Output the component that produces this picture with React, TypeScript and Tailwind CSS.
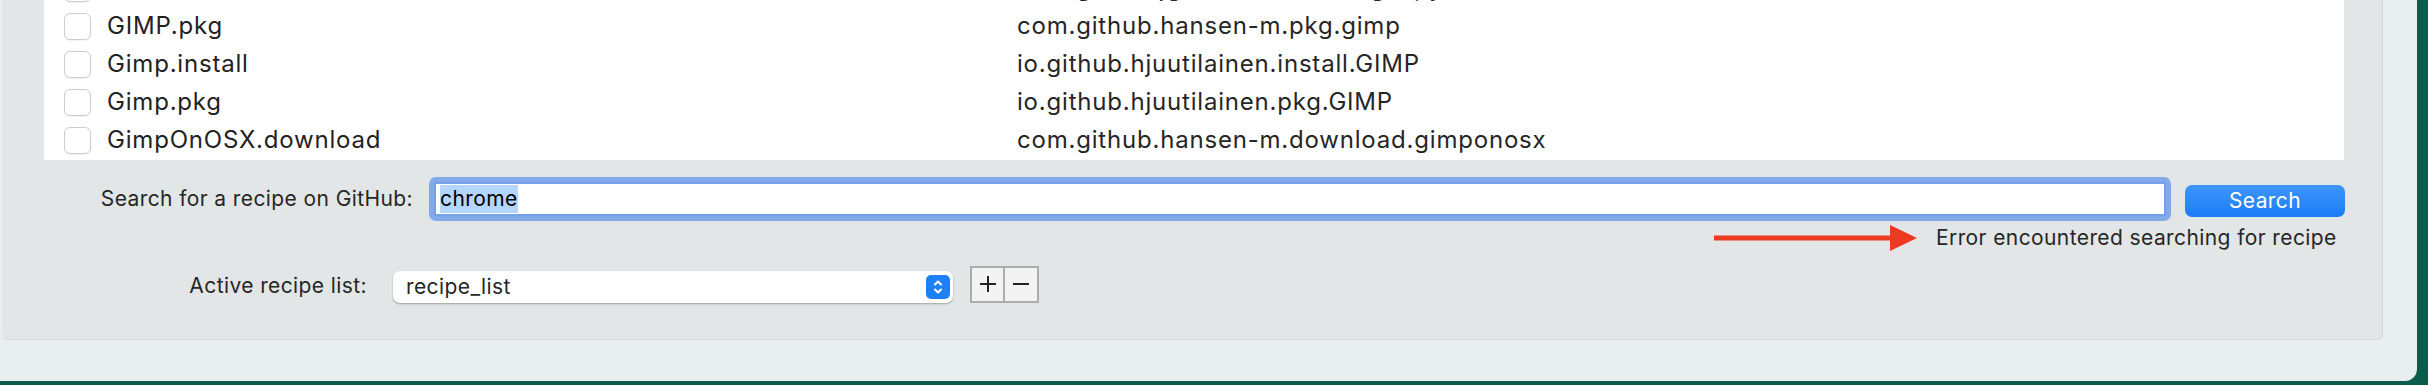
import React from 'react';

const rows = [
  { name: 'GIMP.download', id: 'com.github.jgstew.download.gimpy' },
  { name: 'GIMP.pkg', id: 'com.github.hansen-m.pkg.gimp' },
  { name: 'Gimp.install', id: 'io.github.hjuutilainen.install.GIMP' },
  { name: 'Gimp.pkg', id: 'io.github.hjuutilainen.pkg.GIMP' },
  { name: 'GimpOnOSX.download', id: 'com.github.hansen-m.download.gimponosx' },
];

const uiFont = "font-['Inter',sans-serif] text-[21px] tracking-[0.4px] text-[#262626]";

function Checkbox() {
  return (
    <div className="w-[27px] h-[27px] shrink-0 rounded-[6px] border border-[#cdcdcd] bg-white shadow-[0_1px_1px_rgba(0,0,0,0.06)]" />
  );
}

function Stepper() {
  return (
    <div className="w-[24px] h-[24px] rounded-[5px] bg-[#1e80f6] flex items-center justify-center">
      <svg width="12" height="18" viewBox="0 0 12 18" fill="none" stroke="white" strokeWidth="2" strokeLinecap="round" strokeLinejoin="round">
        <polyline points="3,6.5 6,3.5 9,6.5" />
        <polyline points="3,11.5 6,14.5 9,11.5" />
      </svg>
    </div>
  );
}

export default function App() {
  return (
    <div className="w-[2428px] h-[385px] bg-[#0b5d4b] overflow-hidden">
      <div className="w-[2417px] h-[381px] bg-[#e8eeee] rounded-br-[12px] pl-[2px]">
        <div className="w-[2381px] h-[340px] bg-[#e3e6e6] rounded-b-[6px] border-b border-r border-[#d3d7d7] flex flex-col">
          {/* recipe table */}
          <div className="ml-[42px] w-[2300px] h-[160px] bg-white overflow-hidden shrink-0">
            <div className="-mt-[31px]">
              {rows.map((r) => (
                <div key={r.name} className="flex items-center h-[38px] pl-[20px]">
                  <Checkbox />
                  <span className="ml-[16px] w-[910px] font-['Inter',sans-serif] text-[24px] tracking-[0.8px] text-[#222]">{r.name}</span>
                  <span className="font-['Inter',sans-serif] text-[24px] tracking-[0.8px] text-[#262626]">{r.id}</span>
                </div>
              ))}
            </div>
          </div>

          {/* search row */}
          <div className="flex items-center mt-[17px] h-[44px]">
            <div className={`w-[411px] text-right ${uiFont}`}>Search for a recipe on GitHub:</div>
            <div className="ml-[16px] w-[1742px] h-[44px] rounded-[7px] bg-[#83a9ea] p-[5px]">
              <div className="h-full bg-white border-2 border-[#76a0e8] flex items-center pl-[4px]">
                <span className={`${uiFont} text-black bg-[#b4d5fe] leading-[28px]`}>chrome</span>
              </div>
            </div>
            <button className="ml-[14px] w-[160px] h-[32px] mt-[4px] rounded-[7px] bg-linear-to-b from-[#3d96fb] to-[#1a7cf5] font-['Inter',sans-serif] text-[21px] tracking-[0.4px] text-white flex items-center justify-center">
              Search
            </button>
          </div>

          {/* error row */}
          <div className="flex items-center h-[26px] mt-[4px] pl-[1712px]">
            <svg width="203" height="26" viewBox="0 0 203 26">
              <rect x="0" y="10.5" width="180" height="5" fill="#ef3a22" />
              <polygon points="176,0 203,13 176,26" fill="#ef3a22" />
            </svg>
            <span className={`ml-[19px] ${uiFont}`}>Error encountered searching for recipe</span>
          </div>

          {/* active recipe list row */}
          <div className="flex items-center h-[38px] mt-[14px]">
            <div className={`w-[365px] text-right ${uiFont} mt-[4px]`}>Active recipe list:</div>
            <div className="ml-[26px] mt-[6px] w-[560px] h-[32px] rounded-[7px] bg-white shadow-[0_1px_2px_rgba(0,0,0,0.3)] flex items-center justify-between pl-[13px] pr-[3px]">
              <span className={`${uiFont} text-[#222]`}>recipe_list</span>
              <Stepper />
            </div>
            <div className="ml-[17px] flex h-[37px] border-2 border-[#acacac] bg-[#f3f3f3]">
              <div className="w-[33px] h-full flex items-center justify-center border-r-2 border-[#acacac]">
                <svg width="18" height="18" viewBox="0 0 18 18" stroke="#222" strokeWidth="2">
                  <line x1="9" y1="1" x2="9" y2="17" />
                  <line x1="1" y1="9" x2="17" y2="9" />
                </svg>
              </div>
              <div className="w-[32px] h-full flex items-center justify-center">
                <svg width="18" height="18" viewBox="0 0 18 18" stroke="#222" strokeWidth="2">
                  <line x1="1" y1="9" x2="17" y2="9" />
                </svg>
              </div>
            </div>
          </div>
        </div>
      </div>
    </div>
  );
}
